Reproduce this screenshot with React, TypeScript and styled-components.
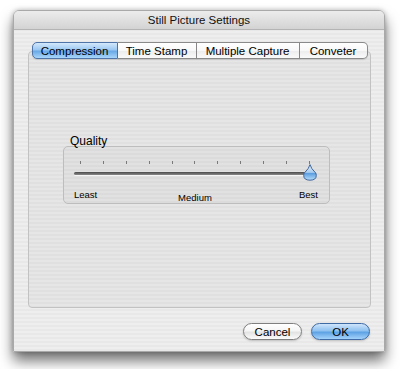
import * as React from "react";
import styled, { createGlobalStyle } from "styled-components";

const GlobalStyle = createGlobalStyle`
    html, body {
        margin: 0;
        padding: 0;
        background: #ffffff;
    }
    body {
        font-family: "Liberation Sans", Arial, sans-serif;
        color: #000;
    }
`;

const pinstripe = `repeating-linear-gradient(to bottom, #eeeeee 0px, #eeeeee 2px, #e8e8e8 2px, #e8e8e8 4px)`;
const darkStripe = `repeating-linear-gradient(to bottom, #e6e6e6 0px, #e6e6e6 2px, #e0e0e0 2px, #e0e0e0 4px)`;

const Page = styled.div`
    width: 400px;
    height: 369px;
    padding: 10px 0 0 13px;
    box-sizing: border-box;
`;

const Window = styled.div`
    width: 372px;
    height: 342px;
    border-radius: 6px 6px 0 0;
    background: ${pinstripe};
    box-shadow: 0 9px 14px rgba(0, 0, 0, 0.55), 0 0 5px rgba(0, 0, 0, 0.25);
    border: 1px solid #a9a9a9;
    box-sizing: border-box;
    display: flex;
    flex-direction: column;
    overflow: hidden;
`;

const TitleBar = styled.div`
    height: 18px;
    flex: none;
    display: flex;
    align-items: center;
    justify-content: center;
    font-size: 11.5px;
    color: #111;
    background: linear-gradient(to bottom, #ececec, #d3d3d3);
    border-bottom: 1px solid #b4b4b4;
`;

const Content = styled.div`
    flex: 1;
    display: flex;
    flex-direction: column;
    padding: 12px 13px 0 14px;
`;

const TabRow = styled.div`
    display: flex;
    justify-content: center;
    position: relative;
    z-index: 1;
    height: 17px;
`;

const Tab = styled.div<{ $w: number; $active?: boolean; $first?: boolean; $last?: boolean }>`
    width: ${(p) => p.$w}px;
    box-sizing: border-box;
    display: flex;
    align-items: center;
    justify-content: center;
    font-size: 11.5px;
    color: #000;
    border: 1px solid ${(p) => (p.$active ? "#4e74a8" : "#8a8a8a")};
    border-left: ${(p) => (p.$first ? undefined : "none")};
    border-radius: ${(p) => (p.$first ? "5px 0 0 5px" : p.$last ? "0 5px 5px 0" : "0")};
    background: ${(p) =>
        p.$active
            ? "linear-gradient(to bottom, #d4e8fb 0%, #9cc8f2 45%, #6aa9e6 55%, #a9d6fb 100%)"
            : "linear-gradient(to bottom, #ffffff 0%, #f8f8f8 50%, #ececec 52%, #fafafa 100%)"};
    box-shadow: 0 1px 1px rgba(0, 0, 0, 0.12);
`;

const Panel = styled.div`
    margin-top: -8px;
    height: 257px;
    box-sizing: border-box;
    border: 1px solid #c2c2c2;
    border-radius: 4px;
    background: ${darkStripe};
    padding: 82px 0 0 34px;
`;

const GroupLabel = styled.div`
    font-size: 12px;
    line-height: 14px;
    color: #000;
    padding-left: 7px;
`;

const GroupBox = styled.div`
    width: 267px;
    height: 58px;
    margin-top: -2px;
    box-sizing: border-box;
    border: 1px solid #bdbdbd;
    border-radius: 5px;
    background: repeating-linear-gradient(to bottom, #e1e1e1 0px, #e1e1e1 2px, #dbdbdb 2px, #dbdbdb 4px);
    padding: 14px 0 0 10px;
`;

const Slider = styled.div`
    width: 242px;
    position: relative;
`;

const Ticks = styled.div`
    display: flex;
    justify-content: space-between;
    margin: 0 6px;
    height: 3px;
`;

const Tick = styled.span`
    width: 1px;
    height: 3px;
    background: #7a7a7a;
`;

const Track = styled.div`
    margin-top: 8px;
    height: 3px;
    border-radius: 2px;
    background: linear-gradient(to bottom, #4a4a4a, #8a8a8a);
    box-shadow: 0 1px 0 rgba(255, 255, 255, 0.7);
`;

const Thumb = styled.svg`
    position: absolute;
    left: 229px;
    top: 3px;
`;

const Labels = styled.div`
    display: grid;
    grid-template-columns: 1fr auto 1fr;
    margin-top: 14px;
    font-size: 9.5px;
    color: #000;
`;

const Label = styled.span<{ $align: "left" | "center" | "right"; $drop?: number }>`
    text-align: ${(p) => p.$align};
    margin-top: ${(p) => p.$drop ?? 0}px;
    margin-right: ${(p) => (p.$align === "right" ? "-2px" : "0")};
`;

const Buttons = styled.div`
    display: flex;
    justify-content: flex-end;
    gap: 9px;
    margin-top: 15px;
    padding-right: 1px;
`;

const Button = styled.div<{ $primary?: boolean }>`
    width: 59px;
    height: 17px;
    box-sizing: border-box;
    border-radius: 9px;
    display: flex;
    align-items: center;
    justify-content: center;
    font-size: 11.5px;
    color: #000;
    border: 1px solid ${(p) => (p.$primary ? "#3f6aa3" : "#7f7f7f")};
    background: ${(p) =>
        p.$primary
            ? "linear-gradient(to bottom, #cfe5fb 0%, #8fc1f0 45%, #5ea2e4 55%, #a4d3fb 100%)"
            : "linear-gradient(to bottom, #ffffff 0%, #f5f5f5 45%, #e3e3e3 55%, #fbfbfb 100%)"};
    box-shadow: 0 1px 2px rgba(0, 0, 0, 0.2);
`;

const tabs = [
    { label: "Compression", w: 86 },
    { label: "Time Stamp", w: 79 },
    { label: "Multiple Capture", w: 103 },
    { label: "Conveter", w: 68 },
];

const QualitySlider = () => (
    <Slider>
        <Ticks>
            {Array.from({ length: 11 }).map((_, i) => (
                <Tick key={i} />
            ))}
        </Ticks>
        <Track />
        <Thumb width="14" height="17" viewBox="0 0 14 17">
            <defs>
                <linearGradient id="thumbFill" x1="0" y1="0" x2="0" y2="1">
                    <stop offset="0" stopColor="#e3eef9" />
                    <stop offset="0.5" stopColor="#a6cbef" />
                    <stop offset="0.56" stopColor="#5a9de0" />
                    <stop offset="1" stopColor="#b8defc" />
                </linearGradient>
            </defs>
            <path
                d="M7 0.6 Q8 4.5 12.3 8.6 Q13.3 9.7 13.3 11.4 Q13.3 16.2 7 16.2 Q0.7 16.2 0.7 11.4 Q0.7 9.7 1.7 8.6 Q6 4.5 7 0.6 Z"
                fill="url(#thumbFill)"
                stroke="#42669a"
                strokeWidth="1"
            />
        </Thumb>
        <Labels>
            <Label $align="left">Least</Label>
            <Label $align="center" $drop={3}>Medium</Label>
            <Label $align="right">Best</Label>
        </Labels>
    </Slider>
);

export default function App() {
    return (
        <Page>
            <GlobalStyle />
            <Window>
                <TitleBar>Still Picture Settings</TitleBar>
                <Content>
                    <TabRow>
                        {tabs.map((t, i) => (
                            <Tab
                                key={t.label}
                                $w={t.w}
                                $active={i === 0}
                                $first={i === 0}
                                $last={i === tabs.length - 1}
                            >
                                {t.label}
                            </Tab>
                        ))}
                    </TabRow>
                    <Panel>
                        <GroupLabel>Quality</GroupLabel>
                        <GroupBox>
                            <QualitySlider />
                        </GroupBox>
                    </Panel>
                    <Buttons>
                        <Button>Cancel</Button>
                        <Button $primary>OK</Button>
                    </Buttons>
                </Content>
            </Window>
        </Page>
    );
}
